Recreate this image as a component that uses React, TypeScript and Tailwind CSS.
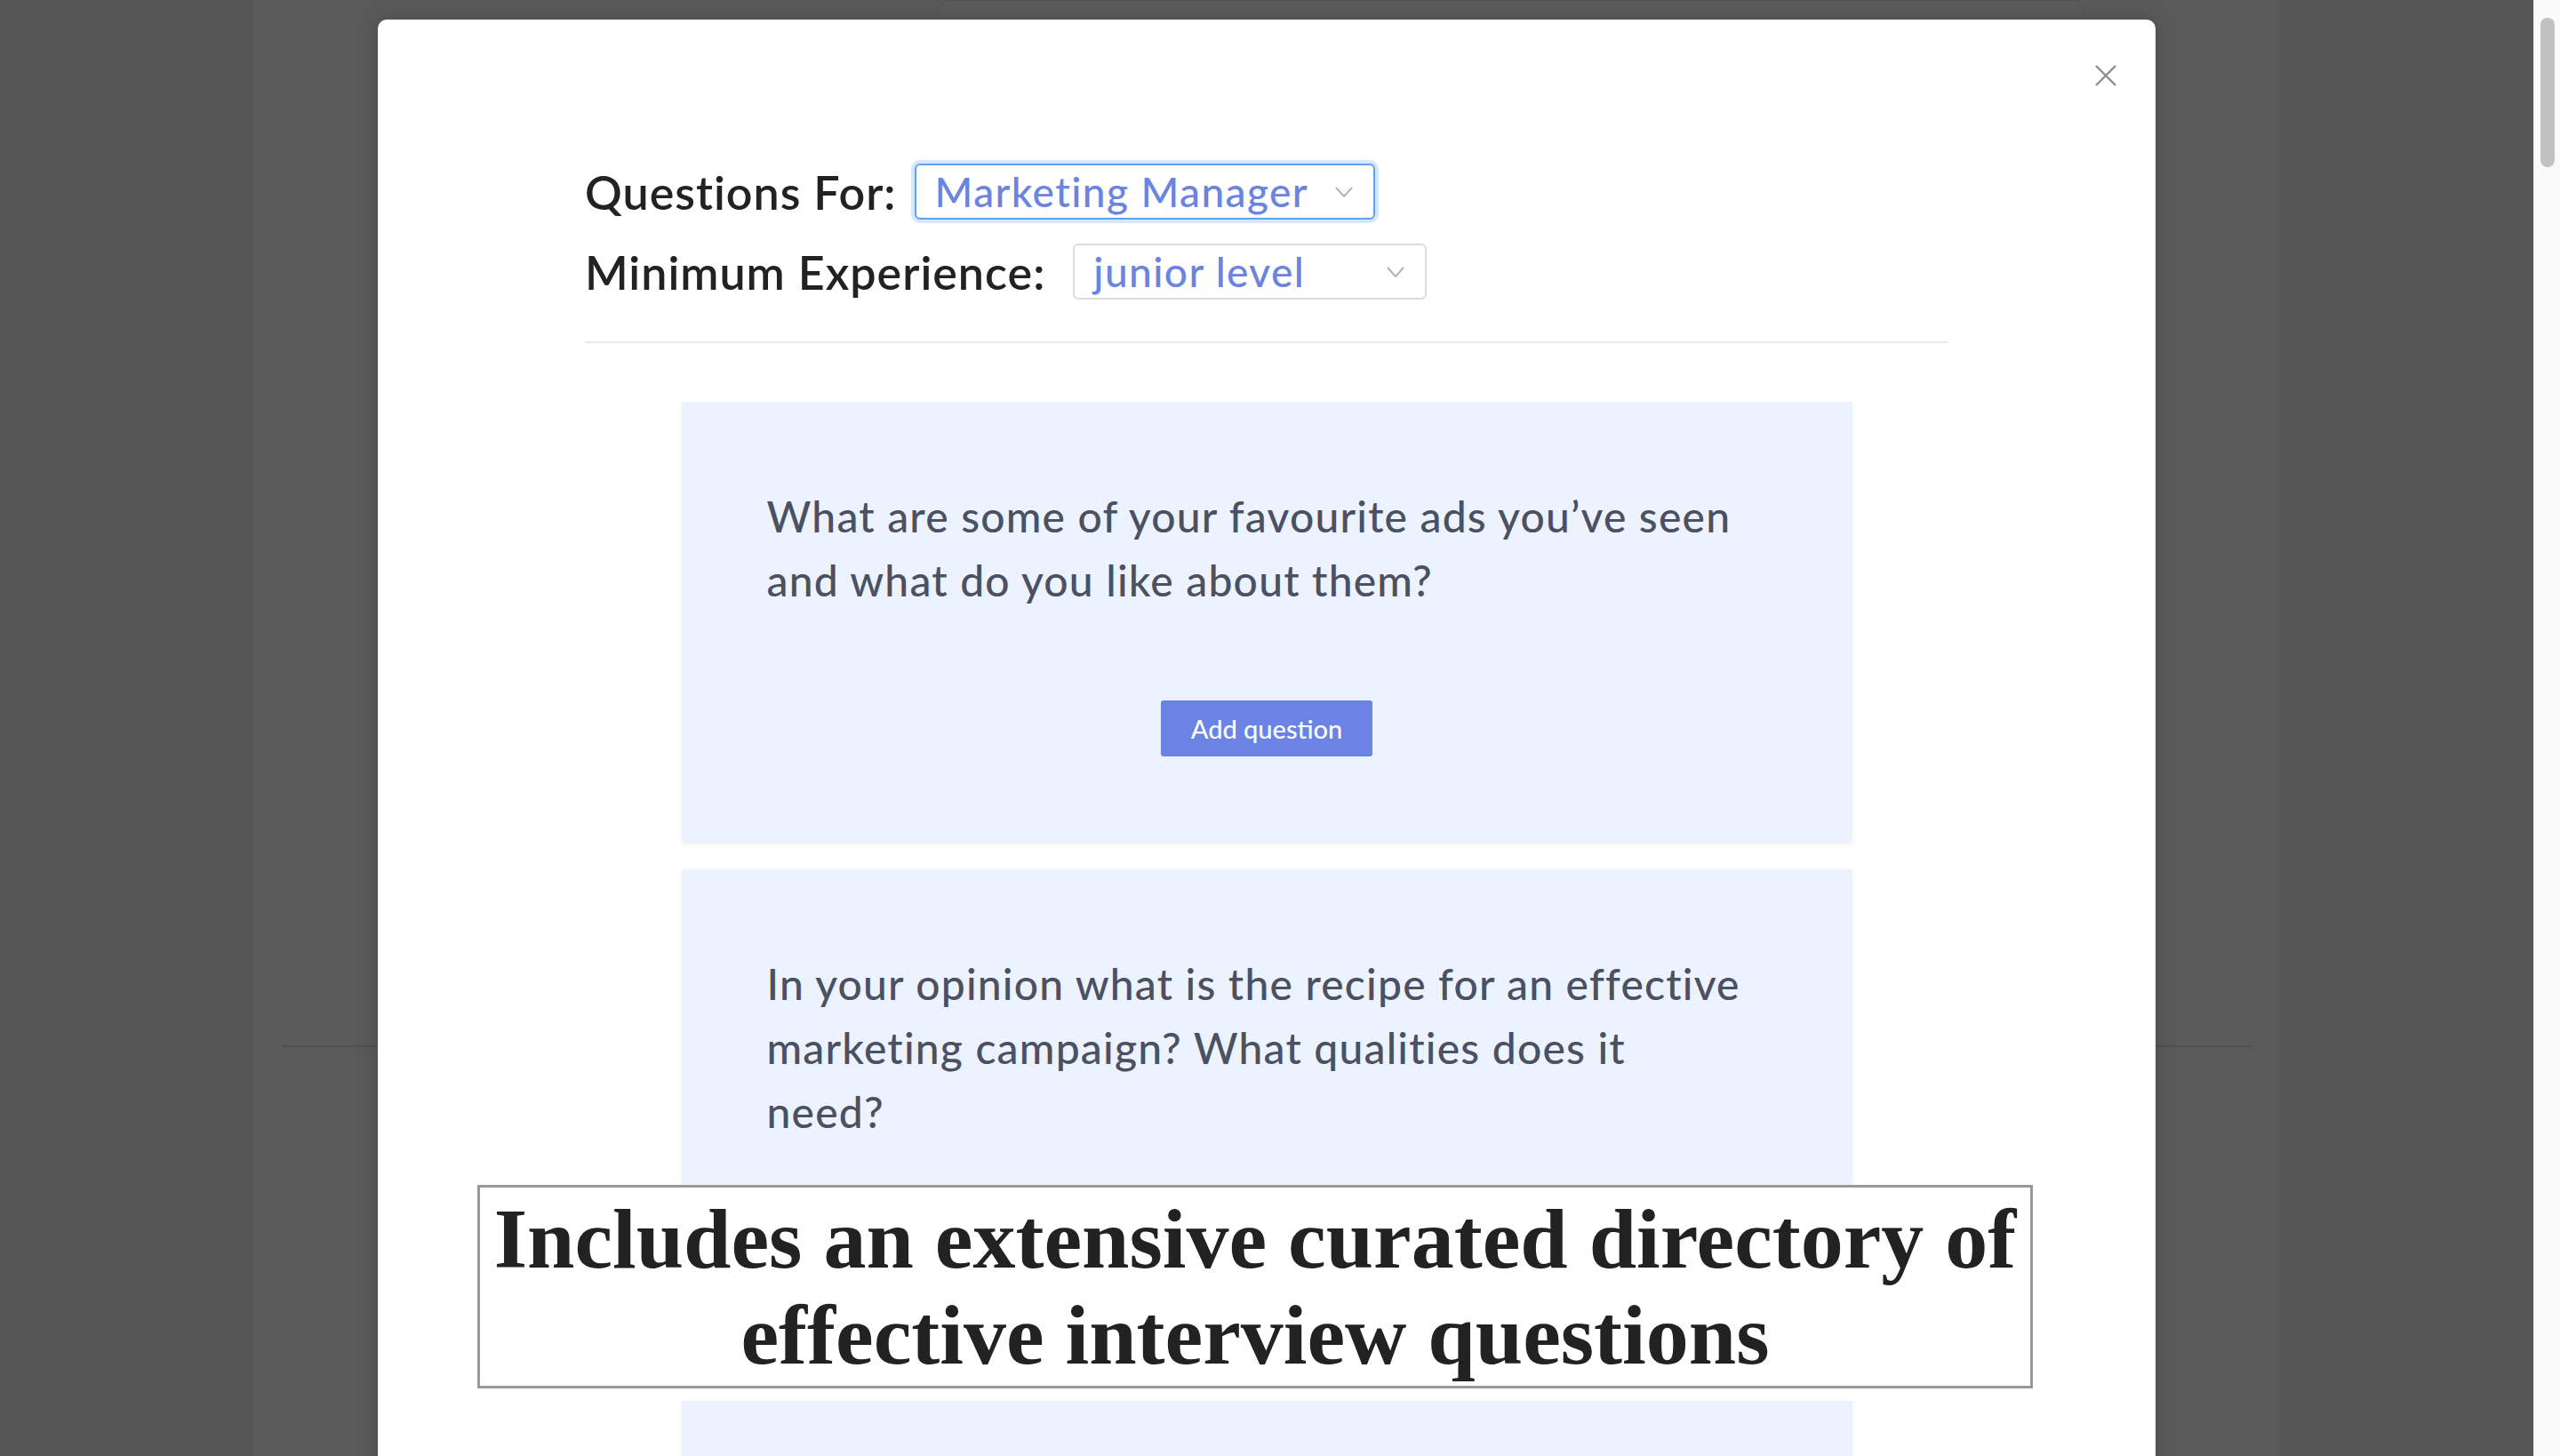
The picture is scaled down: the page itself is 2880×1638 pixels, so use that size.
import React from 'react';

const questions = [
  ['What are some of your favourite ads you’ve seen', 'and what do you like about them?'],
  ['In your opinion what is the recipe for an effective', 'marketing campaign? What qualities does it', 'need?'],
];

const Chevron = () => (
  <svg width="20" height="12" viewBox="0 0 20 12" fill="none" className="shrink-0">
    <path d="M1 1 10 11 19 1" stroke="#b3b3b3" strokeWidth="2" />
  </svg>
);

const Select = ({ value, focused, width }: { value: string; focused?: boolean; width: string }) => (
  <div
    className={`flex h-[63px] items-center justify-between rounded-[6px] border-2 bg-white pl-[21px] pr-[23px] ${width} ${
      focused ? 'border-[#5ea1f4] ring-4 ring-[#d6e8fd]' : 'border-[#dcdcdc]'
    }`}
  >
    <span className="text-[46px] font-medium leading-none tracking-[1.4px] text-[#6b84e0]">{value}</span>
    <Chevron />
  </div>
);

const QuestionCard = ({ lines }: { lines: string[] }) => (
  <div className="flex w-[1317px] flex-col bg-[#ecf3fe] px-[96px] pb-[97px] pt-[93px] shadow-[0_2px_6px_rgba(0,0,0,0.06)]">
    <p className="text-[48px] font-medium leading-[72px] tracking-[1.2px] text-[#4b5163]">
      {lines.map((l, i) => (
        <React.Fragment key={i}>
          {l}
          {i < lines.length - 1 && <br />}
        </React.Fragment>
      ))}
    </p>
    <button className="mx-auto mt-[99px] h-[63px] w-[238px] rounded-[3px] bg-[#6b84e3] text-[29px] font-medium text-white">
      Add question
    </button>
  </div>
);

export default function App() {
  return (
    <div className="flex h-[1638px] w-full overflow-hidden bg-[#555555] font-['Lato',sans-serif]">
      <div className="relative flex-1">
        {/* page behind the dimmed overlay */}
        <div className="mx-auto h-full w-[2280px] bg-[#5a5a5a] px-[32px]">
          <div className="h-[1178px] border-b-2 border-[#4e4e4e]">
            <div className="ml-[738px] h-[400px] w-[1291px] rounded-t-[12px] border border-[#535353] bg-[#5b5b5b]" />
          </div>
        </div>

        {/* modal */}
        <div className="absolute inset-0 flex justify-center pt-[22px]">
          <div className="relative h-[2400px] w-[2000px] rounded-t-[10px] bg-white px-[233px] pt-[162px] shadow-[0_0_24px_rgba(0,0,0,0.18)]">
            <button className="absolute right-[44px] top-[51px]">
              <svg width="24" height="24" viewBox="0 0 24 24">
                <path d="M1 1 23 23M23 1 1 23" stroke="#8c8c8c" strokeWidth="2.4" />
              </svg>
            </button>

            <div className="flex items-center gap-[20px]">
              <span className="text-[52px] font-semibold leading-none tracking-[1px] text-[#222222]">Questions For:</span>
              <Select value="Marketing Manager" focused width="w-[518px]" />
            </div>
            <div className="mt-[27px] flex items-center gap-[31px]">
              <span className="text-[52px] font-semibold leading-none tracking-[1px] text-[#222222]">Minimum Experience:</span>
              <Select value="junior level" width="w-[398px]" />
            </div>

            <div className="mt-[47px] h-[2px] bg-[#e9e9e9]" />

            <div className="mt-[66px] flex flex-col items-center gap-[30px]">
              {questions.map((q, i) => (
                <QuestionCard key={i} lines={q} />
              ))}
              {/* next card, scrolled below the fold */}
              <div className="h-[400px] w-[1317px] bg-[#ecf3fe] shadow-[0_2px_6px_rgba(0,0,0,0.06)]" />
            </div>
          </div>
        </div>

        {/* caption */}
        <div className="absolute left-[537px] top-[1333px] flex h-[229px] w-[1750px] flex-col items-center justify-center border-[3px] border-[#999999] bg-white">
          <p className="whitespace-nowrap text-center font-['Liberation_Serif',serif] text-[96px] font-bold leading-[108px] text-[#222222]">
            Includes an extensive curated directory of
            <br />
            effective interview questions
          </p>
        </div>
      </div>

      {/* scrollbar */}
      <div className="w-[30px] border-l border-[#e6e6e6] bg-[#fafafa]">
        <div className="ml-[7px] mt-[20px] h-[168px] w-[16px] rounded-full bg-[#c1c1c1]" />
      </div>
    </div>
  );
}
